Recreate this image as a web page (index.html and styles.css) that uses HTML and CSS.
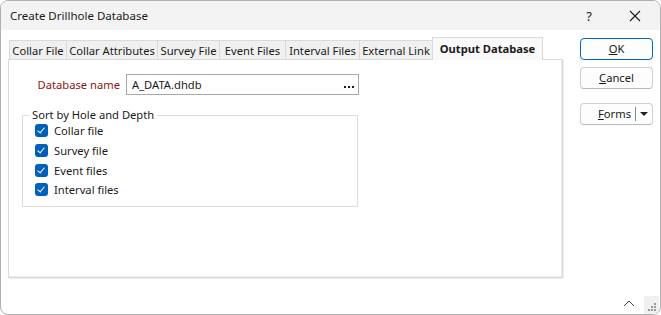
FILE: index.html
```
<!DOCTYPE html>
<html lang="en">

<head>
    <meta charset="UTF-8">
    <meta name="viewport" content="width=device-width, initial-scale=1.0">
    <title>Create Drillhole Database</title>
    <link rel="stylesheet" href="styles.css">
</head>

<body>
    <div class="window">
        <!--标题栏-->
        <div class="titlebar">
            <span class="title">Create Drillhole Database</span>
            <span class="help">?</span>
            <span class="close">
                <svg width="12" height="12" viewBox="0 0 12 12"><path d="M1 1L11 11M11 1L1 11" stroke="#1a1a1a" stroke-width="1.1" fill="none"/></svg>
            </span>
        </div>
        <div class="content">
            <div class="main">
                <ul class="tabs">
                    <li class="t1">Collar File</li>
                    <li class="t2">Collar Attributes</li>
                    <li class="t3">Survey File</li>
                    <li class="t4">Event Files</li>
                    <li class="t5">Interval Files</li>
                    <li class="t6">External Link</li>
                    <li class="t7 current">Output Database</li>
                </ul>
                <div class="panel">
                    <div class="row">
                        <label class="label">Database name</label>
                        <div class="input">
                            <span>A_DATA.dhdb</span>
                            <span class="dots">
                                <svg width="11" height="3" viewBox="0 0 11 3" fill="#1a1a1a"><rect x="0" y="0" width="2" height="2"/><rect x="4" y="0" width="2" height="2"/><rect x="8" y="0" width="2" height="2"/></svg>
                            </span>
                        </div>
                    </div>
                    <fieldset class="group">
                        <legend>Sort by Hole and Depth</legend>
                        <div class="check"><i></i>Collar file</div>
                        <div class="check"><i></i>Survey file</div>
                        <div class="check"><i></i>Event files</div>
                        <div class="check"><i></i>Interval files</div>
                    </fieldset>
                </div>
            </div>
            <div class="side">
                <div class="btn primary"><u>O</u>K</div>
                <div class="btn"><u>C</u>ancel</div>
                <div class="btn forms">
                    <span class="forms-text"><u>F</u>orms</span>
                    <span class="split"></span>
                    <span class="arrow"></span>
                </div>
            </div>
        </div>
        <div class="footer">
            <svg class="caret" width="12" height="8" viewBox="0 0 12 8"><path d="M1 7L6 2L11 7" stroke="#444" stroke-width="1" fill="none"/></svg>
            <span class="grip">
                <svg width="10" height="10" viewBox="0 0 10 10" fill="#9a9a9a">
                    <rect x="7" y="1" width="2" height="2"/>
                    <rect x="4" y="4" width="2" height="2"/>
                    <rect x="7" y="4" width="2" height="2"/>
                    <rect x="1" y="7" width="2" height="2"/>
                    <rect x="4" y="7" width="2" height="2"/>
                    <rect x="7" y="7" width="2" height="2"/>
                </svg>
            </span>
        </div>
    </div>
</body>

</html>
```

FILE: styles.css
```
* {
    margin: 0;
    padding: 0;
    box-sizing: border-box;
}

ul {
    list-style: none
}

body {
    font-family: "Noto Sans", "Open Sans", sans-serif;
    font-size: 11.2px;
    color: #1a1a1a;
    background: #fff;
}

.window {
    width: 661px;
    height: 315px;
    border: 1px solid #b0b0b0;
    border-radius: 8px;
    overflow: hidden;
    display: flex;
    flex-direction: column;
    background: #fff;
}

.titlebar {
    height: 29px;
    background: #f3f3f3;
    display: flex;
    align-items: center;
    padding-left: 9px;
    flex-shrink: 0;
}

.title {
    flex: 1;
    font-size: 11.5px;
}

.help {
    width: 46px;
    text-align: center;
    font-size: 13px;
}

.close {
    width: 46px;
    height: 29px;
    display: flex;
    align-items: center;
    justify-content: center;
    margin-right: 2px;
}

.content {
    display: flex;
    padding: 7px 0 0 7px;
    flex: 1;
}

.main {
    width: 555px;
    flex-shrink: 0;
    display: flex;
    flex-direction: column;
}

.tabs {
    display: flex;
    align-items: flex-end;
    height: 23px;
    padding-left: 1px;
}

.tabs li {
    flex-shrink: 0;
    height: 20px;
    line-height: 19px;
    text-align: center;
    background: #f0f0f0;
    border: 1px solid #dadada;
    border-bottom: none;
    margin-right: -1px;
    white-space: nowrap;
}

.tabs .t1 { width: 58px; }
.tabs .t2 { width: 92px; }
.tabs .t3 { width: 63px; }
.tabs .t4 { width: 67px; }
.tabs .t5 { width: 75px; }
.tabs .t6 { width: 74px; }
.tabs .t7 { width: 111px; }

.tabs li.current {
    height: 23px;
    line-height: 21px;
    font-weight: bold;
    background: #f9f9f9;
    position: relative;
    z-index: 1;
}

.panel {
    height: 219px;
    border: 1px solid #dadada;
    box-shadow: inset -1px -1px 0 #eeeeee, 1px 1px 0 #eeeeee;
    margin-top: -1px;
    padding: 14px 0 0 13px;
}

.row {
    display: flex;
    align-items: center;
    height: 21px;
}

.label {
    width: 104px;
    text-align: right;
    padding-right: 6px;
    color: #8c1414;
}

.input {
    width: 233px;
    height: 21px;
    border: 1px solid #a9a9a9;
    display: flex;
    align-items: center;
    justify-content: space-between;
    padding: 0 3px 0 5px;
}

.dots {
    display: flex;
    padding-top: 5px;
}

.group {
    width: 336px;
    height: 99px;
    margin-top: 13px;
    border: 1px solid #dcdcdc;
    padding: 0 0 0 12px;
}

.group legend {
    margin-left: -6px;
    padding: 0 3px;
    line-height: 14px;
}

.check {
    display: flex;
    align-items: center;
    height: 19.7px;
    position: relative;
    top: -1px;
}

.check i {
    width: 13px;
    height: 13px;
    border-radius: 3px;
    background: #005fb8;
    margin-right: 6px;
    position: relative;
}

.check i:after {
    content: "";
    position: absolute;
    left: 4px;
    top: 2px;
    width: 3px;
    height: 6px;
    border-right: 1px solid #fff;
    border-bottom: 1px solid #fff;
    transform: rotate(40deg);
}

.side {
    margin-left: 17px;
    padding-top: 1px;
    display: flex;
    flex-direction: column;
}

.btn {
    width: 73px;
    height: 22px;
    border: 1px solid #d0d0d0;
    border-bottom-color: #b8b8b8;
    border-radius: 4px;
    background: #fdfdfd;
    text-align: center;
    line-height: 20px;
    margin-bottom: 7px;
}

.btn.primary {
    border: 1px solid #0067c0;
}

.btn.forms {
    margin-top: 7px;
    display: flex;
    align-items: center;
    justify-content: flex-end;
    padding-right: 4px;
}

.forms-text {
    margin-right: 4px;
}

.split {
    width: 1px;
    height: 14px;
    background: #8a8a8a;
    margin-right: 4px;
}

.arrow {
    width: 0;
    height: 0;
    border-left: 4px solid transparent;
    border-right: 4px solid transparent;
    border-top: 4px solid #222;
}

.footer {
    height: 24px;
    display: flex;
    align-items: flex-end;
    justify-content: flex-end;
    flex-shrink: 0;
}

.caret {
    margin: 0 9px 7px 0;
}

.grip {
    width: 15px;
    height: 18px;
    background: #f0f0f0;
    display: flex;
    align-items: flex-end;
    justify-content: flex-end;
    padding: 0 2px 2px 0;
    margin-right: 1px;
}
```
